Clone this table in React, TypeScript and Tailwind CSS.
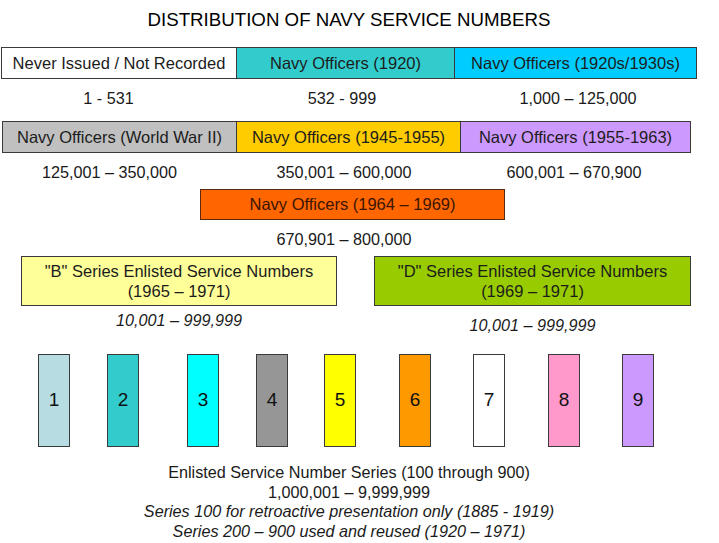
import React from 'react';

type Cell = { label: string; box: string; range: string; rangeCls: string };

const row1: Cell[] = [
  { label: 'Never Issued / Not Recorded', box: 'w-[236px] bg-white', range: '1 - 531', rangeCls: 'w-[236px] pr-[21px]' },
  { label: 'Navy Officers (1920)', box: 'w-[218px] bg-[#33cccc] border-l-0', range: '532 - 999', rangeCls: 'w-[218px] pr-[8px]' },
  { label: 'Navy Officers (1920s/1930s)', box: 'w-[242px] bg-[#00ccff] border-l-0', range: '1,000 – 125,000', rangeCls: 'w-[242px] pl-[4px]' },
];

const row2: Cell[] = [
  { label: 'Navy Officers (World War II)', box: 'w-[235px] bg-[#c0c0c0]', range: '125,001 – 350,000', rangeCls: 'w-[235px] pr-[20px]' },
  { label: 'Navy Officers (1945-1955)', box: 'w-[224px] bg-[#ffcc00] border-l-0', range: '350,001 – 600,000', rangeCls: 'w-[224px] pr-[10px]' },
  { label: 'Navy Officers (1955-1963)', box: 'w-[230px] bg-[#cc99ff] border-l-0', range: '600,001 – 670,900', rangeCls: 'w-[230px] pr-[4px]' },
];

const series = [
  { n: '1', cls: 'ml-[38px] bg-[#b7dde3]' },
  { n: '2', cls: 'ml-[37px] bg-[#33cccc]' },
  { n: '3', cls: 'ml-[48px] bg-[#00ffff]' },
  { n: '4', cls: 'ml-[37px] bg-[#969696]' },
  { n: '5', cls: 'ml-[36px] bg-[#ffff00]' },
  { n: '6', cls: 'ml-[43px] bg-[#ff9900]' },
  { n: '7', cls: 'ml-[42px] bg-white' },
  { n: '8', cls: 'ml-[43px] bg-[#ff99cc]' },
  { n: '9', cls: 'ml-[42px] bg-[#cc99ff]' },
];

function BoxRow({ cells, left }: { cells: Cell[]; left: string }) {
  return (
    <>
      <div className={`flex h-[32px] ${left}`}>
        {cells.map((c) => (
          <div
            key={c.label}
            className={`flex items-center justify-center border-[1.5px] border-[#3a3a3a] pt-[1px] text-[16.5px] text-[#1c1c1c] ${c.box}`}
          >
            {c.label}
          </div>
        ))}
      </div>
      <div className={`flex ${left}`}>
        {cells.map((c) => (
          <div key={c.range} className={`pt-[9px] text-center text-[16.2px] leading-[20px] ${c.rangeCls}`}>
            {c.range}
          </div>
        ))}
      </div>
    </>
  );
}

export default function App() {
  return (
    <div className="w-[719px] h-[543px] overflow-hidden bg-white text-[#1a1a1a] font-['Liberation_Sans',Arial,sans-serif]">
      {/* title */}
      <div className="h-[47px] w-[698px] pt-[8px] text-center text-[18.7px] leading-[24px] text-black">
        DISTRIBUTION OF NAVY SERVICE NUMBERS
      </div>

      <BoxRow cells={row1} left="pl-[1px]" />
      <div className="h-[13px]" />
      <BoxRow cells={row2} left="pl-[2px]" />
      <div className="h-[7px]" />

      {/* 1964-1969 */}
      <div className="flex h-[31px] pl-[200px]">
        <div className="flex w-[305px] items-center justify-center border-[1.5px] border-[#5a2a10] bg-[#ff6600] text-[16.5px] text-[#3a1500]">
          Navy Officers (1964 – 1969)
        </div>
      </div>
      <div className="h-[36px] w-[688px] pt-[9px] text-center text-[16.2px] leading-[20px]">670,901 – 800,000</div>

      {/* B / D series */}
      <div className="flex h-[50px]">
        <div className="ml-[21px] flex w-[316px] flex-col items-center justify-center border-[1.5px] border-[#3a3a3a] bg-[#ffff99] text-[16.5px] leading-[20.5px] text-[#1c1c1c]">
          <span>"B" Series Enlisted Service Numbers</span>
          <span>(1965 – 1971)</span>
        </div>
        <div className="ml-[37px] flex w-[317px] flex-col items-center justify-center border-[1.5px] border-[#3a3a3a] bg-[#99cc00] text-[16.5px] leading-[20.5px] text-[#1c1c1c]">
          <span>"D" Series Enlisted Service Numbers</span>
          <span>(1969 – 1971)</span>
        </div>
      </div>
      <div className="flex h-[48px] text-[16.2px] italic leading-[20px]">
        <div className="ml-[21px] w-[316px] pt-[4px] text-center">10,001 – 999,999</div>
        <div className="ml-[37px] w-[317px] pt-[9px] text-center">10,001 – 999,999</div>
      </div>

      {/* series 100-900 */}
      <div className="flex h-[93px]">
        {series.map((s) => (
          <div
            key={s.n}
            className={`flex w-[32px] items-center justify-center border-[1.5px] border-[#3a3a3a] text-[19px] text-[#111] ${s.cls}`}
          >
            {s.n}
          </div>
        ))}
      </div>

      <div className="w-[698px] pt-[16px] text-center text-[16.2px] leading-[19.5px]">
        <div>Enlisted Service Number Series (100 through 900)</div>
        <div>1,000,001 – 9,999,999</div>
        <div className="italic">Series 100 for retroactive presentation only (1885 - 1919)</div>
        <div className="italic">Series 200 – 900 used and reused (1920 – 1971)</div>
      </div>
    </div>
  );
}
